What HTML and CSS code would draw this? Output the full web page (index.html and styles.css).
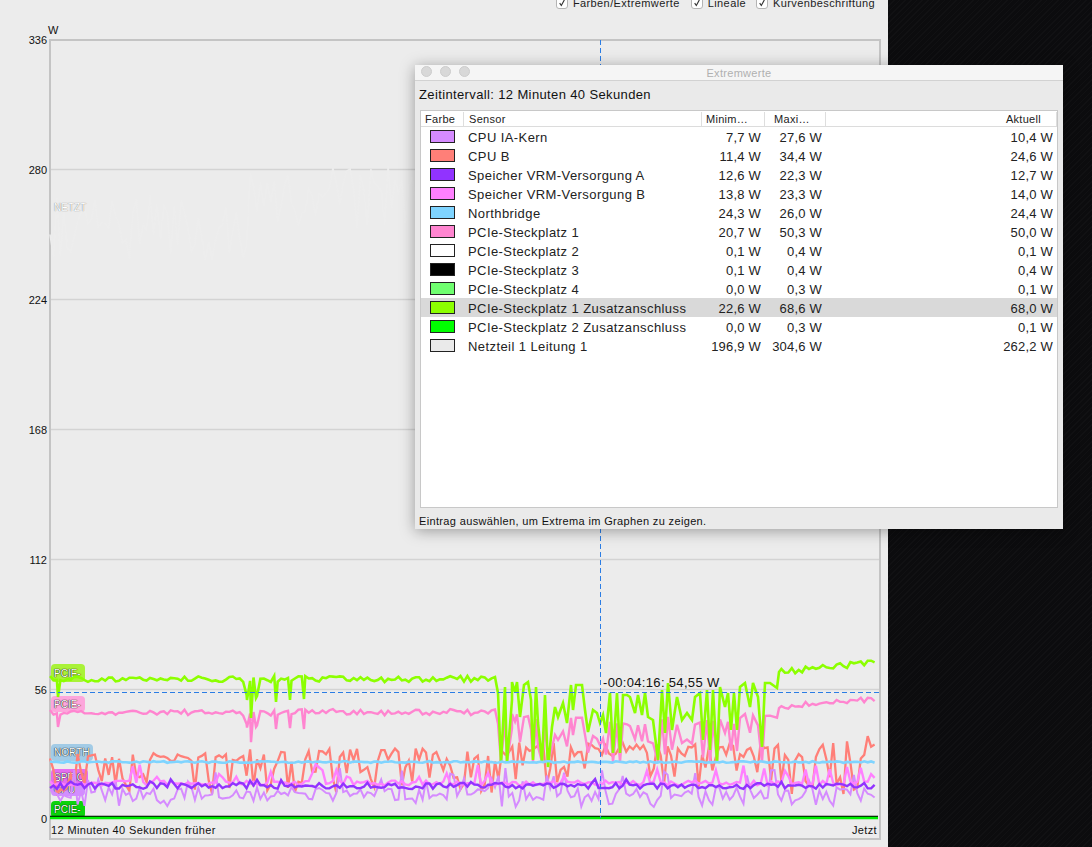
FILE: index.html
```html
<!DOCTYPE html>
<html lang="de">
<head>
    <meta charset="UTF-8">
    <title>Extremwerte</title>
    <link rel="stylesheet" href="styles.css">
</head>
<body>
    <div class="panel">
        <div class="options">
            <label class="option"><span class="check"><svg viewBox="0 0 12 12"><path d="M3.2 6.2 L5.2 9 L8.8 2.4"/></svg></span>Farben/Extremwerte</label>
            <label class="option"><span class="check"><svg viewBox="0 0 12 12"><path d="M3.2 6.2 L5.2 9 L8.8 2.4"/></svg></span>Lineale</label>
            <label class="option"><span class="check"><svg viewBox="0 0 12 12"><path d="M3.2 6.2 L5.2 9 L8.8 2.4"/></svg></span>Kurvenbeschriftung</label>
        </div>

        <!-- graph, coordinates are page pixels -->
        <svg class="chart" viewBox="0 10 888 837" width="888" height="837">
            <g class="grid">
                <line x1="50" x2="880" y1="169.5" y2="169.5"/>
                <line x1="50" x2="880" y1="299.5" y2="299.5"/>
                <line x1="50" x2="880" y1="429.5" y2="429.5"/>
                <line x1="50" x2="880" y1="559.5" y2="559.5"/>
                <line x1="50" x2="880" y1="689.5" y2="689.5"/>
            </g>
            <rect class="frame" x="50" y="40" width="830" height="799"/>

            <g class="tags">
                <rect x="51" y="664" width="34" height="18" rx="4" fill="#a9f238"/>
                <text class="tag" x="54" y="677">PCIE-</text>
                <rect x="51" y="696" width="34" height="16" rx="4" fill="#fda6dc"/>
                <text class="tag" x="54" y="708">PCIE-</text>
                <rect x="51" y="783" width="34" height="13" rx="4" fill="#d18fff"/>
                <text class="tag" x="54" y="793">CPU</text>
                <rect x="51" y="744" width="42" height="17" rx="4" fill="#a2cbe6"/>
                <text class="tag" x="54" y="756">NORTH</text>
                <rect x="51" y="769" width="37" height="17" rx="4" fill="#e56cf0"/>
                <text class="tag" x="54" y="781">SPEIC</text>
                <rect x="51" y="801" width="34" height="17" rx="4" fill="#0bd30b"/>
                <text class="tag" x="54" y="813">PCIE-</text>
            </g>

            <g id="curves"></g>
            <text class="tag ghost" x="54" y="211">NETZT</text>
            <line class="cursor" x1="600.5" x2="600.5" y1="40" y2="818"/>
            <line class="cursor" x1="50" x2="880" y1="692.5" y2="692.5"/>
            <g class="axis">
                <text x="47" y="44">336</text>
                <text x="47" y="174">280</text>
                <text x="47" y="304">224</text>
                <text x="47" y="434">168</text>
                <text x="47" y="564">112</text>
                <text x="47" y="694">56</text>
                <text x="47" y="823">0</text>
            </g>
            <text class="unit" x="48" y="34">W</text>
            <text class="tip" x="603" y="687">-00:04:16: 54,55 W</text>
            <text class="foot" x="51" y="834">12 Minuten 40 Sekunden früher</text>
            <text class="foot end" x="877" y="834">Jetzt</text>
        </svg>
    </div>

    <div class="backdrop"></div>

    <div class="window">
        <div class="titlebar">
            <div class="lights"><span></span><span></span><span></span></div>
            <div class="title">Extremwerte</div>
        </div>
        <div class="interval">Zeitintervall: 12 Minuten 40 Sekunden</div>

        <div class="table">
            <div class="row head">
                <div>Farbe</div>
                <div>Sensor</div>
                <div>Minim…</div>
                <div>Maxi…</div>
                <div class="now">Aktuell</div>
            </div>
            <div id="rows"></div>
        </div>
        <div class="status">Eintrag auswählen, um Extrema im Graphen zu zeigen.</div>
    </div>

    <script src="script.js"></script>
</body>
</html>
```

FILE: styles.css
```css
*{
    box-sizing: border-box;
}
html,body{
    margin: 0;
    padding: 0;
}
body{
    display: flex;
    width: 1092px;
    height: 847px;
    overflow: hidden;
    position: relative;
    font-family: "Liberation Sans", sans-serif;
    color: #1c1c1c;
    background: #ececec;
}
.panel{
    width: 888px;
    flex: none;
    background: #ececec;
}
.backdrop{
    flex: 1;
    background-color: #0d0d0f;
    background-image:
        repeating-linear-gradient(135deg, #111113 0, #111113 1px, #0c0c0e 1px, #0c0c0e 4px);
}

/* top check boxes, cut off by the screen edge */
.options{
    height: 10px;
    display: flex;
    justify-content: flex-end;
    align-items: flex-end;
    padding-right: 13px;
    overflow: hidden;
}
.option{
    display: flex;
    align-items: flex-end;
    gap: 5px;
    margin-left: 11px;
    font-size: 11px;
    line-height: 13px;
    letter-spacing: 0.4px;
    white-space: nowrap;
}
.option:last-child{
    margin-left: 10px;
}
.check{
    width: 12px;
    height: 12px;
    margin-bottom: 1px;
    background: #fff;
    border: 1px solid #b4b4b4;
    border-radius: 3px;
    display: block;
}
.check svg{
    display: block;
    width: 10px;
    height: 10px;
}
.check path{
    fill: none;
    stroke: #333;
    stroke-width: 1.4;
}

/* graph */
.chart{
    display: block;
}
.grid line{
    stroke: #d3d3d3;
    stroke-width: 1.5;
}
.frame{
    fill: none;
    stroke: #c4c4c4;
    stroke-width: 2;
}
.cursor{
    stroke: #2b7de4;
    stroke-width: 1;
    stroke-dasharray: 5 3;
}
.curve{
    fill: none;
    stroke-linejoin: miter;
}
.chart text{
    font-family: "Liberation Sans", sans-serif;
    fill: #111;
}
.axis text{
    font-size: 11px;
    text-anchor: end;
}
.unit{
    font-size: 11px;
}
.tip{
    font-size: 13px;
    letter-spacing: 0.33px;
}
.foot{
    font-size: 11px;
    letter-spacing: 0.37px;
}
.foot.end{
    text-anchor: end;
}
.tag{
    font-size: 10px;
}
.chart .tag{
    fill: #fff;
    text-shadow: 0 0 1px #000, 0 0 1px #000;
}
.chart .tag.ghost{
    fill: #fff;
    text-shadow: 0 0 1px #555;
}

/* floating window */
.window{
    position: absolute;
    left: 415px;
    top: 65px;
    width: 648px;
    height: 464px;
    background: #eaeaea;
    box-shadow: 0 2px 14px rgba(0,0,0,0.35);
    display: flex;
    flex-direction: column;
}
.titlebar{
    height: 16px;
    flex: none;
    background: #f5f5f5;
    border-bottom: 1px solid #d2d2d2;
    position: relative;
}
.lights{
    display: flex;
    gap: 8px;
    padding: 1px 0 0 6px;
}
.lights span{
    width: 11px;
    height: 11px;
    border-radius: 50%;
    background: #d8d8d8;
    border: 1px solid #cdcdcd;
}
.title{
    position: absolute;
    left: 0;
    right: 0;
    top: 2px;
    text-align: center;
    font-size: 11px;
    line-height: 13px;
    letter-spacing: 0.3px;
    color: #b0b0b0;
}
.interval{
    height: 29px;
    flex: none;
    padding: 6px 0 0 4px;
    font-size: 13px;
    line-height: 15px;
    letter-spacing: 0.37px;
    color: #111;
}
.table{
    height: 398px;
    flex: none;
    margin: 0 5px;
    background: #fff;
    border: 1px solid #c8c8c8;
}
.row{
    display: grid;
    grid-template-columns: 43px 238px 63px 61px 231px;
    height: 19px;
    align-items: center;
    font-size: 13px;
    letter-spacing: 0.42px;
    color: #222;
}
.row.active{
    background: #d9d9d9;
}
.row .num{
    text-align: right;
    padding: 2px 4px 0 0;
    letter-spacing: 0.2px;
}
.row .name{
    padding: 2px 0 0 4px;
}
.swatch{
    display: block;
    width: 25px;
    height: 13px;
    margin-left: 9px;
    border: 1px solid #222;
}
.row.head{
    height: 16px;
    border-bottom: 1px solid #dcdcdc;
    font-size: 11px;
    line-height: 15px;
    letter-spacing: 0.3px;
}
.row.head div{
    padding-left: 5px;
    border-right: 1px solid #dedede;
    height: 14px;
    line-height: 14px;
}
.row.head div:first-child{
    padding-left: 4px;
}
.row.head div:nth-child(3){
    padding-left: 4px;
}
.row.head div:nth-child(4){
    padding-left: 9px;
}
.row.head .now{
    text-align: right;
    padding-right: 15px;
}
.status{
    padding: 7px 0 0 4px;
    font-size: 11px;
    line-height: 13px;
    letter-spacing: 0.35px;
    color: #111;
}
```

FILE: script.js
```js
let sensors = [
    {name: "CPU IA-Kern", color: "#d58bff", min: "7,7 W", max: "27,6 W", now: "10,4 W"},
    {name: "CPU B", color: "#ff7f78", min: "11,4 W", max: "34,4 W", now: "24,6 W"},
    {name: "Speicher VRM-Versorgung A", color: "#9133ff", min: "12,6 W", max: "22,3 W", now: "12,7 W"},
    {name: "Speicher VRM-Versorgung B", color: "#ff80ff", min: "13,8 W", max: "23,3 W", now: "14,0 W"},
    {name: "Northbridge", color: "#7fd4ff", min: "24,3 W", max: "26,0 W", now: "24,4 W"},
    {name: "PCIe-Steckplatz 1", color: "#ff85d0", min: "20,7 W", max: "50,3 W", now: "50,0 W"},
    {name: "PCIe-Steckplatz 2", color: "#ffffff", min: "0,1 W", max: "0,4 W", now: "0,1 W"},
    {name: "PCIe-Steckplatz 3", color: "#000000", min: "0,1 W", max: "0,4 W", now: "0,4 W"},
    {name: "PCIe-Steckplatz 4", color: "#70ff70", min: "0,0 W", max: "0,3 W", now: "0,1 W"},
    {name: "PCIe-Steckplatz 1 Zusatzanschluss", color: "#8cff00", min: "22,6 W", max: "68,6 W", now: "68,0 W", active: true},
    {name: "PCIe-Steckplatz 2 Zusatzanschluss", color: "#00ff00", min: "0,0 W", max: "0,3 W", now: "0,1 W"},
    {name: "Netzteil 1 Leitung 1", color: "#eaeaea", min: "196,9 W", max: "304,6 W", now: "262,2 W"}
];

const rows = document.querySelector("#rows");
sensors.forEach((item)=>{
    let div = document.createElement("div");
    div.classList.add("row");
    if(item.active) div.classList.add("active");
    div.innerHTML = `
        <div><span class="swatch" style="background:${item.color}"></span></div>
        <div class="name">${item.name}</div>
        <div class="num">${item.min}</div>
        <div class="num">${item.max}</div>
        <div class="num">${item.now}</div>
    `;
    rows.appendChild(div);
});

// small seeded random so the picture is the same every time
let seed = 4711;
function rnd(){
    seed = (seed * 16807) % 2147483647;
    return seed / 2147483647;
}
function noise(n){
    return (rnd() - 0.5) * 2 * n;
}

const STEP = 3.45, LEFT = 50, RIGHT = 878;

// the busy part of the green curve, read off the reference (x, y)
const busy = [[495,677],[498,693],[501,763],[505,687],[507,763],[512,700],[512,682],[515,692],[517,682],[520,717],[524,685],[528,682],[531,700],[533,760],[536,687],[538,723],[542,762],[545,695],[548,767],[552,727],[555,707],[558,717],[563,703],[567,723],[571,685],[573,710],[576,685],[582,685],[585,710],[588,732],[593,710],[597,713],[600,723],[603,715],[606,733],[610,693],[613,753],[617,693],[620,753],[623,695],[627,695],[630,697],[635,713],[638,695],[642,715],[645,693],[648,717],[653,720],[658,760],[662,690],[665,733],[668,683],[672,730],[677,697],[682,720],[687,713],[692,720],[695,697],[700,693],[703,740],[707,690],[710,750],[713,690],[717,763],[720,687],[725,707],[728,693],[731,730],[734,693],[737,730],[740,687],[745,683],[750,707],[753,683],[758,697],[762,747],[765,683],[770,683],[777,688],[779,672]];

const xs = [];
for(let x = LEFT; x <= RIGHT; x += STEP) xs.push(x);

function greenAt(x){
    let y = x < 495 ? 679 : 672 - (x-779) * 0.1;
    y += noise(3);
    if(x > 245 && x < 310 && rnd() < 0.3) y += 10 + rnd() * 12;
    return y;
}
const greenDips = [[58,697],[247,700],[251,718],[256,698],[276,702],[290,700],[304,699]];

let greenPts = [];
xs.forEach((x)=>{
    if(x <= 495 || x >= 779) greenPts.push([x,greenAt(x)]);
});
busy.forEach((p)=>greenPts.push(p));
greenDips.forEach((p)=>greenPts.push(p));
greenPts.sort((a,b)=>a[0]-b[0]);

// pink follows the green one, a bit lower
let pinkPts = greenPts.map((p)=>{
    let y = 818 - 0.76 * (818 - p[1]) + noise(1.5);
    return [p[0], Math.min(y,762)];
});

let redPts = xs.map((x)=>{
    let y;
    if(x < 245){
        y = 757 + noise(4);
        if(rnd() < (x < 170 ? 0.45 : 0.35)) y = 768 + rnd() * 28;
    }else if(x < 500){
        y = 755 + noise(7);
        if(rnd() < 0.4) y = 765 + rnd() * 28;
    }else if(x < 780){
        y = 750 + noise(8);
        if(rnd() < 0.25) y = 765 + rnd() * 22;
    }else{
        y = 750 + noise(14);
        if(rnd() < 0.4) y = 775 + rnd() * 20;
    }
    return [x,y];
});

let cyanPts = xs.map((x)=>[x, 762 + noise(0.8)]);

let lilacPts = xs.map((x)=>{
    let y = 794 + noise(7);
    if(rnd() < 0.12) y = 803 + rnd() * 4;
    if(rnd() < 0.14) y = 768 + rnd() * 14;
    return [x,y];
});

let magentaPts = xs.map((x)=>{
    let y = 783 + noise(2.5);
    if(rnd() < 0.12) y = 764 + rnd() * 14;
    return [x,y];
});

let purplePts = xs.map((x)=>[x, 786 + noise(3) - (rnd() < 0.1 ? 4 : 0)]);

let ghostPts = xs.map((x)=>{
    let top = x < 250 ? 195 : 165;
    return [x, top + rnd() * 65];
});

const curves = document.querySelector("#curves");
function draw(points,color,width){
    let line = document.createElementNS("http://www.w3.org/2000/svg","polyline");
    line.setAttribute("points",points.map((p)=>p[0].toFixed(1)+","+p[1].toFixed(1)).join(" "));
    line.setAttribute("class","curve");
    line.setAttribute("stroke",color);
    line.setAttribute("stroke-width",width);
    curves.appendChild(line);
}

draw(ghostPts.filter((p)=>p[0] < 420),"#ededed",1.6);
draw(redPts,"#ff7f78",2.3);
draw(pinkPts,"#ff85d0",2.4);
draw(greenPts,"#8cff00",2.6);
draw(cyanPts,"#7fd4ff",2.6);
draw(lilacPts,"#d58bff",2);
draw(magentaPts,"#ff80ff",2.4);
draw(purplePts,"#9133ff",2.4);
draw([[LEFT,817],[RIGHT,817]],"#000000",2.5);
draw([[LEFT,818],[RIGHT,818]],"#00f000",2.5);
```
